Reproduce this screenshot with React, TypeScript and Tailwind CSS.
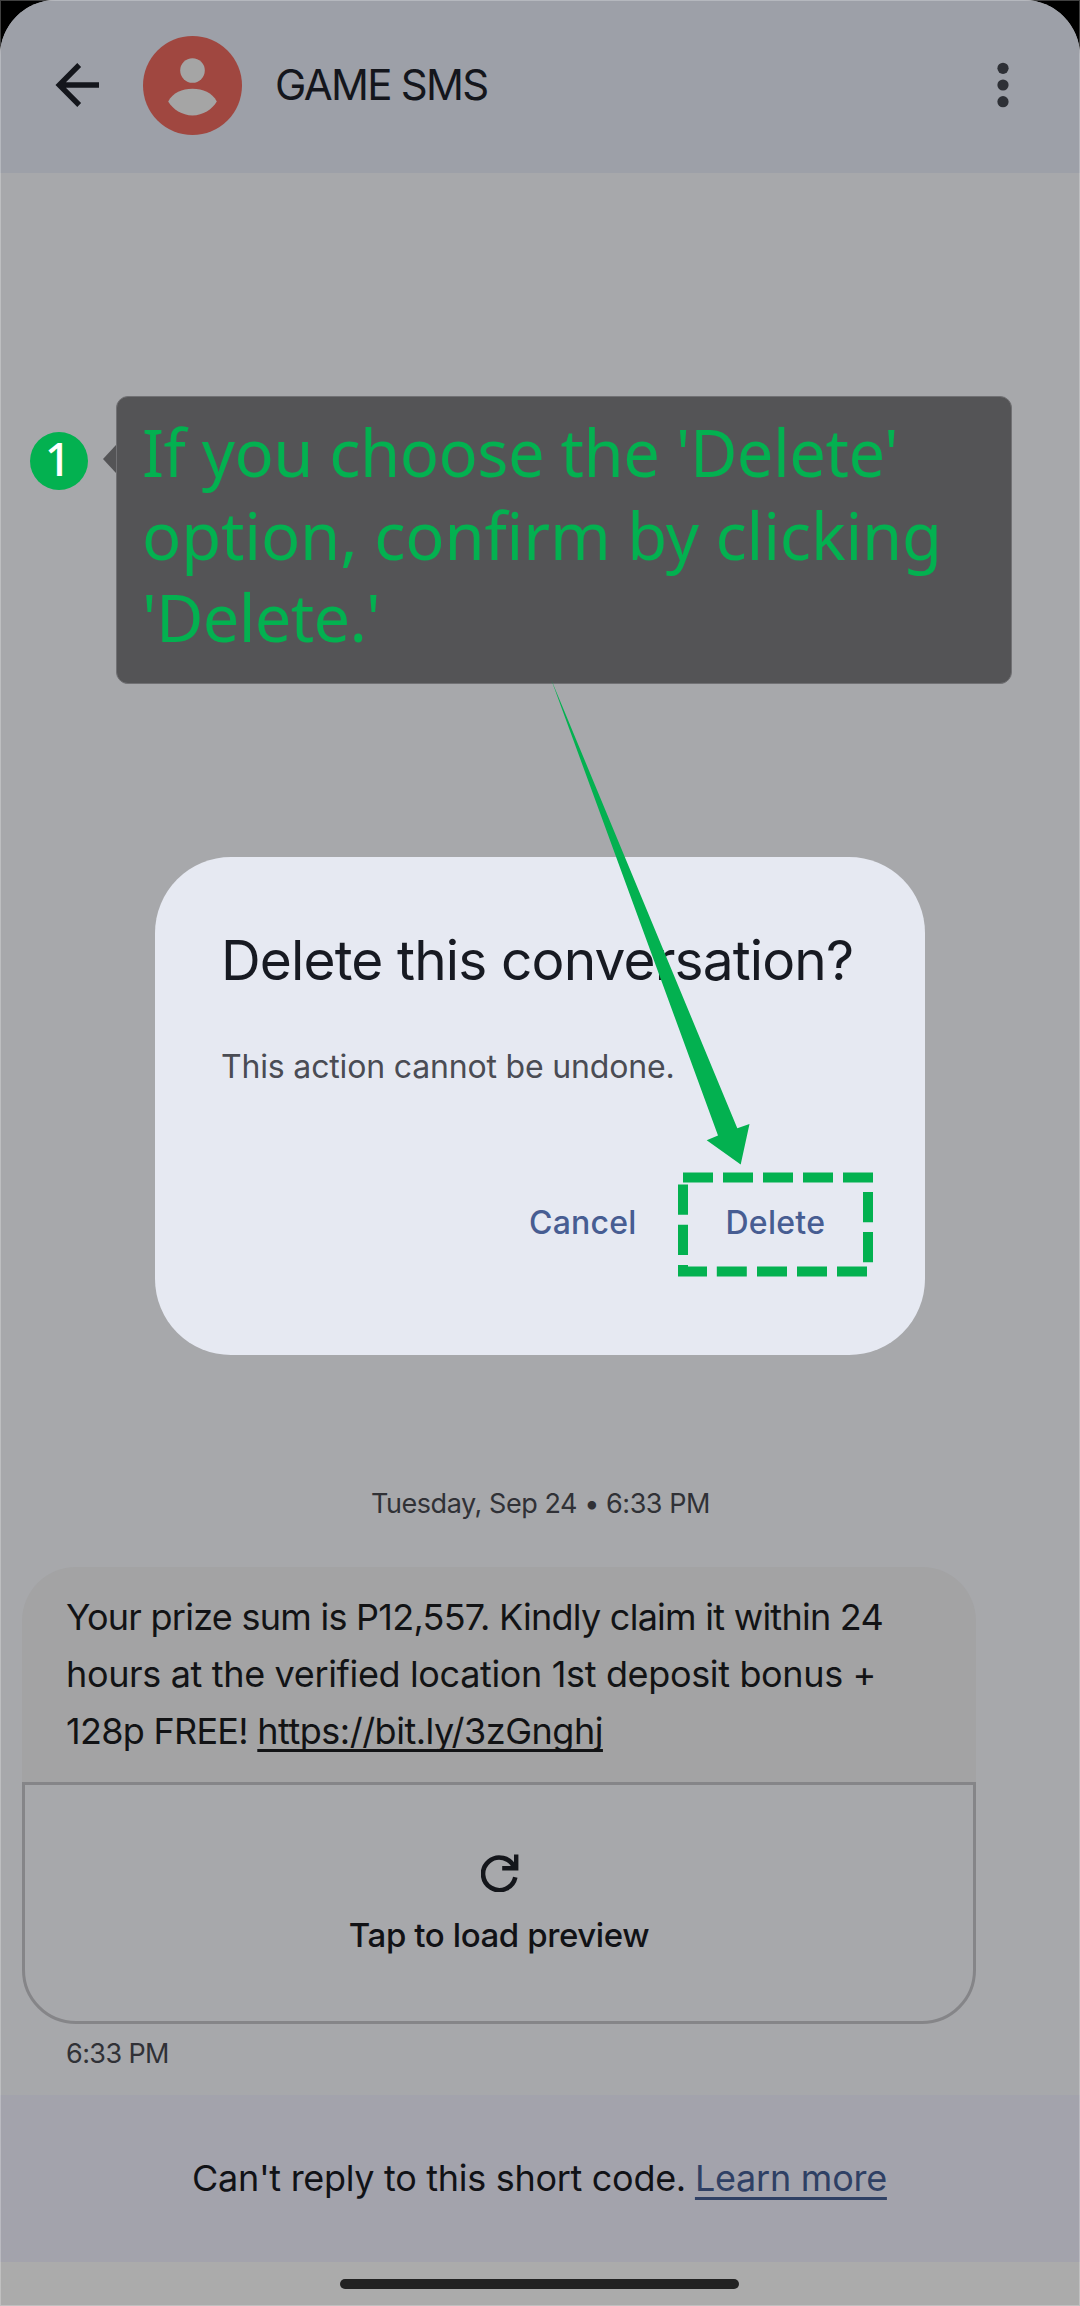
const GREEN = "#03b150";

function BackIcon() {
  return (
    <svg className="mb-[1px] h-[48px] w-[48px]" viewBox="0 0 48 48" fill="none" stroke="#14161c" strokeWidth="5.4">
      <path d="M27.2 4 L7.3 24 L27.2 44 M7.5 24 H47" strokeMiterlimit="10" />
    </svg>
  );
}

function Avatar() {
  return (
    <svg className="h-[99px] w-[99px]" viewBox="0 0 99 99">
      <circle cx="49.5" cy="49.5" r="49.5" fill="#a04740" />
      <circle cx="49.5" cy="34.5" r="12.3" fill="#a5a5a5" />
      <path d="M25.2 65.5 C30 56.5 39 52.8 49.5 52.8 S69 56.5 73.8 65.5 C69 73.5 60 79.4 49.5 79.4 S30 73.5 25.2 65.5 Z" fill="#a5a5a5" />
    </svg>
  );
}

function MoreIcon() {
  return (
    <svg className="mb-[1px] h-[46px] w-[12px]" viewBox="0 0 12 46" fill="#2e3036">
      <circle cx="6" cy="6.3" r="5.6" />
      <circle cx="6" cy="23" r="5.6" />
      <circle cx="6" cy="39.7" r="5.6" />
    </svg>
  );
}

function ReloadIcon() {
  return (
    <svg className="ml-[2px] h-[38px] w-[38px]" viewBox="0 0 38 38" fill="none" stroke="#14161b" strokeWidth="4.6">
      <path d="M33.5 13.8 A16.3 16.3 0 1 0 34.3 23.2" />
      <path d="M35.2 0.5 V14.2 H21.2" strokeWidth="4.4" />
    </svg>
  );
}

function Header() {
  return (
    <header className="flex h-[173px] shrink-0 items-center bg-[#9da0a8] pb-[2px] pl-[52px] pr-[71px]">
      <BackIcon />
      <div className="ml-[43px]">
        <Avatar />
      </div>
      <h1 className="mb-[1px] ml-[33px] grow whitespace-nowrap text-[42px] leading-[52px] tracking-[-1.7px] text-[#14161c]">GAME SMS</h1>
      <MoreIcon />
    </header>
  );
}

function Message() {
  return (
    <div className="ml-[22px] w-[954px]">
      <div className="h-[215px] rounded-t-[54px] bg-[#a3a3a4] pl-[44px] pt-[22px] text-[36px] leading-[57.2px] text-[#121315]">
        <p className="whitespace-nowrap tracking-[-0.74px]">Your prize sum is P12,557. Kindly claim it within 24</p>
        <p className="whitespace-nowrap tracking-[-0.35px]">hours at the verified location 1st deposit bonus +</p>
        <p className="whitespace-nowrap tracking-[-0.72px]">
          128p FREE!{" "}
          <a className="tracking-[-0.5px] underline decoration-[3px] underline-offset-[5px] [text-decoration-skip-ink:none]">https://bit.ly/3zGnghj</a>
        </p>
      </div>
      <div className="flex h-[242px] flex-col items-center rounded-b-[54px] border-[3px] border-[#858588] pt-[69px]">
        <ReloadIcon />
        <p className="mt-[23px] whitespace-nowrap text-[33px] font-medium leading-[40px] tracking-[-0.4px] text-[#111216]">Tap to load preview</p>
      </div>
      <p className="mt-[10px] pl-[44px] text-[27px] leading-[40px] tracking-[-0.6px] text-[#303136]">6:33 PM</p>
    </div>
  );
}

function Callout() {
  return (
    <>
      <div className="absolute left-[29.5px] top-[432px] flex h-[58px] w-[58px] items-center justify-center rounded-full bg-[#03b150] pb-[7px] pr-[1px] font-['Noto_Sans',sans-serif] text-[46px] font-medium leading-[58px] text-white">1</div>
      <div className="absolute left-[103px] top-[396px] flex">
        <svg className="mt-[49px] h-[28px] w-[13px]" viewBox="0 0 13 28" fill="#545456">
          <path d="M13 0 V28 L0 14 Z" />
        </svg>
        <div className="h-[288px] w-[896px] rounded-[12px] border border-[#717174] bg-[#545456] pl-[25px] pt-[14px] font-['Noto_Sans',sans-serif] text-[65px] leading-[82.6px] text-[#03b150]">
          <p className="whitespace-nowrap tracking-[-0.5px]">If you choose the 'Delete'</p>
          <p className="whitespace-nowrap tracking-[-0.15px]">option, confirm by clicking</p>
          <p className="whitespace-nowrap tracking-[-0.7px]">'Delete.'</p>
        </div>
      </div>
    </>
  );
}

function Dialog() {
  return (
    <div role="dialog" className="absolute left-[155px] top-[857px] h-[498px] w-[770px] rounded-[76px] bg-[#e6e9f2] pl-[66px] pt-[69px]">
      <h2 className="whitespace-nowrap text-[55px] leading-[68px] tracking-[-0.87px] text-[#171a22]">Delete this conversation?</h2>
      <p className="mt-[53px] whitespace-nowrap text-[32px] leading-[40px] tracking-[-0.17px] text-[#4a4c54]">This action cannot be undone.</p>
      <div className="mt-[116px] flex gap-[89px] pl-[308px] text-[32px] font-medium leading-[40px] text-[#475d92]">
        <button className="tracking-[0.2px]">Cancel</button>
        <button className="tracking-[0.3px]">Delete</button>
      </div>
    </div>
  );
}

function Pointer() {
  return (
    <svg className="pointer-events-none absolute left-[540px] top-[670px] h-[620px] w-[350px]" viewBox="540 670 350 620" fill={GREEN}>
      <path d="M551 679 L737.3 1128.2 L749.5 1124 L740.7 1164.4 L706.7 1140.3 L718 1135.5 Z" />
      <path d="M683 1172.4h30v10.2h-30z M723 1172.4h30v10.2h-30z M763 1172.4h30v10.2h-30z M803 1172.4h30v10.2h-30z M843 1172.4h30v10.2h-30z" />
      <path d="M863 1192h10v30.2h-10z M863 1232h10v30.2h-10z" />
      <path d="M678 1266.4h29v10.2h-29z M716.8 1266.4h30v10.2h-30z M757 1266.4h30v10.2h-30z M797 1266.4h30v10.2h-30z M837 1266.4h30v10.2h-30z" />
      <path d="M678 1184.5h10v30.2h-10z M678 1224.7h10v30.2h-10z M678 1265h10v6h-10z" />
    </svg>
  );
}

export default function App() {
  return (
    <div className="relative h-[2306px] w-[1080px] overflow-hidden bg-black font-['Inter',sans-serif]">
      <div className="flex h-full flex-col overflow-hidden rounded-t-[56px] bg-[#a7a8ab]">
        <Header />
        <main className="flex grow flex-col">
          <p className="mt-[1311px] pl-[1px] text-center text-[27px] leading-[40px] tracking-[-0.45px] text-[#303136]">Tuesday, Sep 24 • 6:33 PM</p>
          <div className="mt-[43px]">
            <Message />
          </div>
        </main>
        <footer className="flex h-[167px] shrink-0 items-center bg-[#a3a3ac] pb-[2px] pl-[192px] text-[36px] leading-[50px] text-[#111216]">
          <span className="whitespace-nowrap tracking-[-0.3px]">Can't reply to this short code.</span>
          <a className="ml-[9px] whitespace-nowrap tracking-[-0.25px] text-[#2f4064] underline decoration-[3px] underline-offset-[6px]">Learn more</a>
        </footer>
        <div className="flex h-[44px] shrink-0 justify-center bg-[#ababab] pr-[2px] pt-[17px]">
          <div className="h-[10px] w-[399px] rounded-full bg-[#222222]" />
        </div>
      </div>
      <Callout />
      <Dialog />
      <Pointer />
      <div className="pointer-events-none absolute inset-0 border border-white/25" />
    </div>
  );
}
